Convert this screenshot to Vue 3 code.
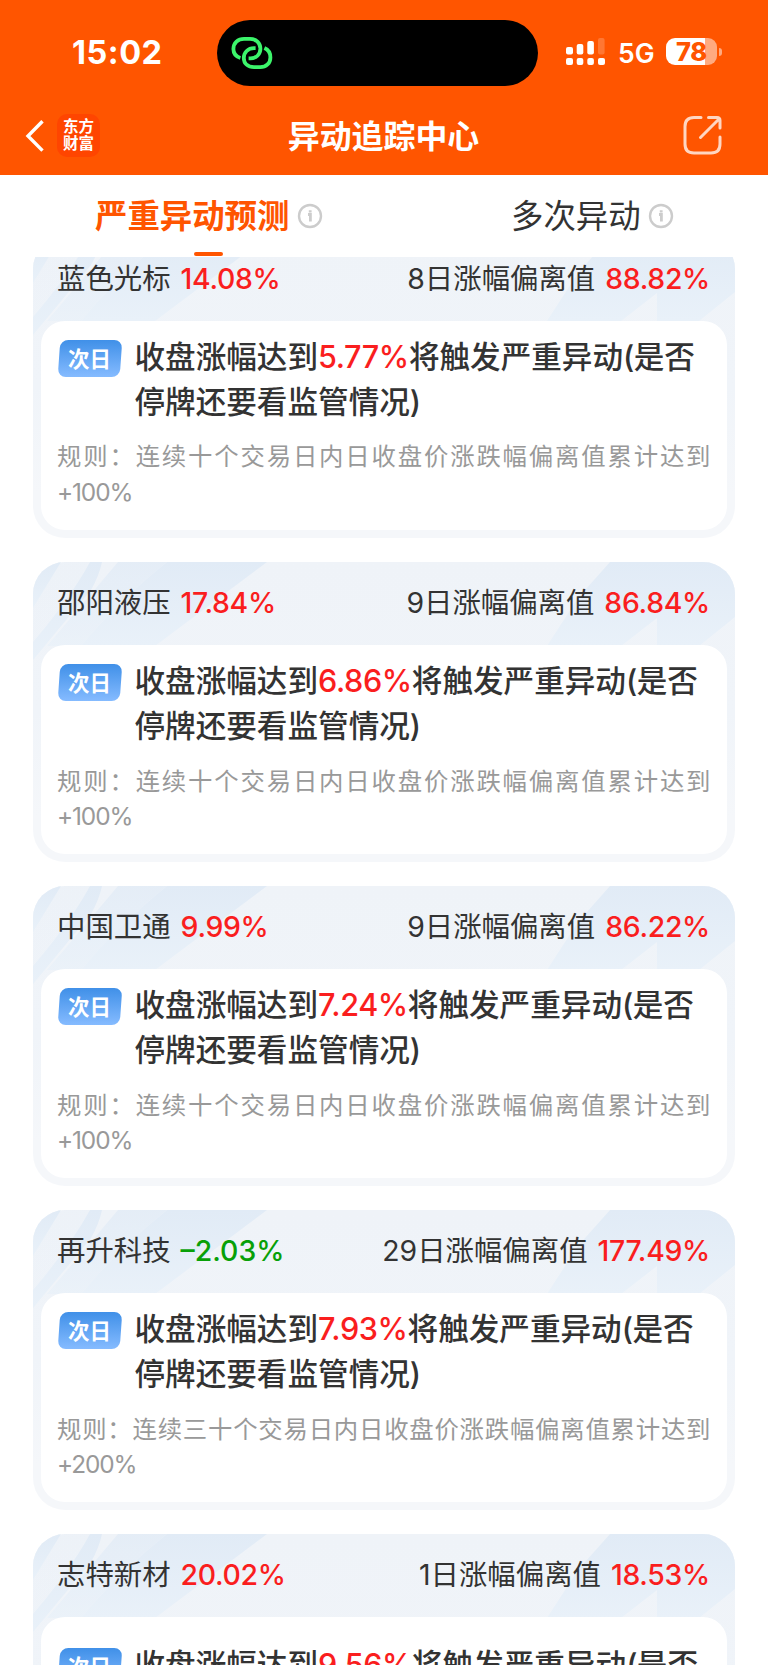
<script setup>
const cards = [
  { name: '蓝色光标', change: '14.08%', days: '8', dev: '88.82%', hit: '5.77%', rule: '规则：连续十个交易日内日收盘价涨跌幅偏离值累计达到', limit: '+100%' },
  { name: '邵阳液压', change: '17.84%', days: '9', dev: '86.84%', hit: '6.86%', rule: '规则：连续十个交易日内日收盘价涨跌幅偏离值累计达到', limit: '+100%' },
  { name: '中国卫通', change: '9.99%', days: '9', dev: '86.22%', hit: '7.24%', rule: '规则：连续十个交易日内日收盘价涨跌幅偏离值累计达到', limit: '+100%' },
  { name: '再升科技', change: '–2.03%', down: true, days: '29', dev: '177.49%', hit: '7.93%', rule: '规则：连续三十个交易日内日收盘价涨跌幅偏离值累计达到', limit: '+200%' },
  { name: '志特新材', change: '20.02%', days: '1', dev: '18.53%', hit: '9.56%', rule: '规则：连续十个交易日内日收盘价涨跌幅偏离值累计达到', limit: '+100%', loose: true },
]
</script>

<template>
  <div class="screen">
    <header class="head">
      <div class="status">
        <span class="time">15:02</span>
        <div class="island">
          <svg class="link" viewBox="0 0 42 34" width="42" height="34" fill="none" stroke="#3cf56b" stroke-width="3.8">
            <path d="M9.4 22 C5 20.6 2.4 17.4 2.4 13 C2.4 7 7 2.9 13 2.9 H19 C25 2.9 29.4 7 29.4 12.6 C29.4 18.6 25 22.4 19.6 22.4 H17.6" />
            <path d="M24.6 12.2 H23 C17 12.2 12.8 16.4 12.8 22 C12.8 27.6 17 31.2 23 31.2 H29.2 C35.2 31.2 39.4 27.2 39.4 21.4 C39.4 17 37.2 13.6 33.4 12" />
          </svg>
        </div>
        <svg class="signal" viewBox="0 0 40 28" width="40" height="28" fill="#fff">
          <rect x="0" y="9" width="7" height="7.5" rx="2" /><rect x="10.7" y="6" width="6.6" height="10.5" rx="2" />
          <rect x="21.3" y="3" width="6.6" height="13.5" rx="2" /><rect x="32" y="0" width="6.6" height="16.5" rx="2" opacity=".2" />
          <rect x="0" y="20" width="7" height="7" rx="2" /><rect x="10.7" y="20" width="6.6" height="7" rx="2" />
          <rect x="21.3" y="20" width="6.6" height="7" rx="2" /><rect x="32" y="20" width="7" height="7" rx="2" />
        </svg>
        <span class="net">5G</span>
        <div class="battery"><span>78</span></div>
        <i class="nub"></i>
      </div>
      <nav class="bar">
        <svg class="back" viewBox="0 0 20 32" width="20" height="32" fill="none" stroke="#fff" stroke-width="3.4"><path d="M17.5 1.2 L3 16 L17.5 30.6" /></svg>
        <div class="logo"><span>东方</span><span>财富</span></div>
        <h1>异动追踪中心</h1>
        <svg class="share" viewBox="0 0 40 40" width="40" height="40" fill="none" stroke="#ffd6c2" stroke-width="3" stroke-linecap="round">
          <path d="M18 2.5 H11 Q2 2.5 2 11.5 V29 Q2 38 11 38 H28 Q37 38 37 29 V22" />
          <path d="M25.5 2.5 H34 Q37 2.5 37 5.5 V13 M36 4 L17.5 22.5" />
        </svg>
      </nav>
    </header>

    <div class="tabs">
      <div class="tab active">
        <span class="label">严重异动预测</span>
        <svg class="info" viewBox="0 0 26 26" width="26" height="26"><circle cx="13" cy="13" r="11" fill="none" stroke="#ccc" stroke-width="2.4" /><path d="M11 11.5 H13.4 V18.5 M13.2 7.2 V9.4" fill="none" stroke="#ccc" stroke-width="2.8" /></svg>
      </div>
      <div class="tab">
        <span class="label">多次异动</span>
        <svg class="info" viewBox="0 0 26 26" width="26" height="26"><circle cx="13" cy="13" r="11" fill="none" stroke="#ccc" stroke-width="2.4" /><path d="M11 11.5 H13.4 V18.5 M13.2 7.2 V9.4" fill="none" stroke="#ccc" stroke-width="2.8" /></svg>
      </div>
      <i class="underline"></i>
    </div>

    <main class="list">
      <section v-for="c in cards" :key="c.name" class="card">
        <svg class="deco" viewBox="0 0 702 120" width="702" height="120">
          <defs>
            <linearGradient id="blue" x1="0" y1="0" x2="0" y2="1"><stop offset="0" stop-color="#e1ebf6" /><stop offset="1" stop-color="#e9f1f9" /></linearGradient>
          </defs>
          <g fill="url(#blue)">
            <path d="M0 0 H28 L0 46 Z" />
            <path d="M57 0 H69 Q66 14 58 28 L0 98 V80 Q36 38 57 0 Z" />
            <path d="M28 0 H57 Q36 38 0 80 V46 Z" opacity=".15" />
            <path d="M85 0 H134 Q84 40 48 84 H14 Z" opacity=".75" />
            <path d="M134 0 H234 L122 84 H48 Q84 40 134 0 Z" />
            <path d="M577 0 H702 V55 L666 84 H624 V56 L588 84 H514 L545 36 Z" />
          </g>
        </svg>
        <div class="top">
          <div class="pair"><span>{{ c.name }}</span><b :class="{ down: c.down }">{{ c.change }}</b></div>
          <div class="pair"><span><em>{{ c.days }}</em>日涨幅偏离值</span><b>{{ c.dev }}</b></div>
        </div>
        <div class="body" :class="{ loose: c.loose }">
          <div class="main">
            <div class="badge"><span>次日</span></div>
            <p class="text">收盘涨幅达到<b>{{ c.hit }}</b>将触发严重异动<em>(</em>是否<br>停牌还要看监管情况<em>)</em></p>
          </div>
          <p class="rule"><span class="line">{{ c.rule }}</span><span class="limit">{{ c.limit }}</span></p>
        </div>
      </section>
    </main>
  </div>
</template>

<style>
html, body { margin: 0; background: #fff; overflow: hidden; }
</style>

<style scoped>
.screen { width: 768px; height: 1665px; overflow: hidden; display: flex; flex-direction: column; background: #fff; color: #333; font-family: Inter, "Noto Sans CJK SC", sans-serif; }
* { box-sizing: border-box; }
p, h1 { margin: 0; }
em { font-style: normal; }
.head { height: 175px; flex: none; background: #ff5500; color: #fff; }
.status { height: 86px; padding-top: 20px; display: flex; align-items: flex-start; }
.time { width: 145px; margin-left: 72px; font-size: 32.5px; line-height: 66px; font-weight: 700; letter-spacing: .5px; }
.island { width: 321px; height: 66px; border-radius: 33px; background: #000; padding: 16px 0 0 14px; }
.link { display: block; }
.signal { margin: 18px 0 0 28px; }
.net { width: 48px; margin-left: 12px; font-size: 26.5px; font-weight: 600; line-height: 67px; }
.battery { width: 51px; height: 27px; margin-top: 18px; border-radius: 9px; background: linear-gradient(90deg, #fff 39px, #ffaa80 39px); color: #ff5500; font-size: 25.5px; font-weight: 800; line-height: 27px; text-align: center; letter-spacing: -.3px; }
.nub { width: 3px; height: 8px; margin: 28px 0 0 1.5px; background: #ffaa80; border-radius: 0 3px 3px 0; }
.bar { height: 89px; display: grid; grid-template-columns: 20px 43px 1fr 40px; align-items: center; padding: 9px 45px 0 25px; }
.back { display: block; margin-top: 2px; }
.logo { width: 43px; height: 43px; margin-left: 12px; border-radius: 10px; background: #ff4500; display: flex; flex-direction: column; justify-content: center; align-items: center; font-size: 15.5px; line-height: 17.5px; font-weight: 700; }
h1 { font-size: 31.9px; line-height: 44px; font-weight: 700; text-align: center; padding: 3px 4px 0 0; }
.share { display: block; margin-top: -1px; }
.tabs { height: 82px; flex: none; display: flex; position: relative; }
.tab { display: flex; align-items: center; font-size: 32.4px; line-height: 44px; height: 82px; padding-left: 95px; }
.tab .label { width: 195px; white-space: nowrap; padding-top: 1px; }
.tab.active .label { color: #ff5500; font-weight: 700; }
.tab + .tab { padding-left: 188px; }
.tab + .tab .label { width: 130px; }
.info { margin-left: 7px; flex: none; }
.underline { position: absolute; left: 194px; top: 77px; width: 29px; height: 4px; border-radius: 2px; background: #ff5500; }
.list { flex: 1; min-height: 0; overflow: hidden; padding: 0 33px; display: flex; flex-direction: column; gap: 24px; }
.card { height: 300.1px; flex: none; position: relative; overflow: hidden; border-radius: 32px; padding: 0 8px 8px; background: linear-gradient(180deg, #eff3f8, #f0f4f9 50%, #f5f7fa 85%); display: flex; flex-direction: column; }
.card:first-child { margin-top: -19.6px; }
.deco { position: absolute; left: 0; top: 0; }
.top { height: 83.6px; flex: none; display: flex; justify-content: space-between; padding: 0 17px 0 16px; position: relative; }
.pair { display: flex; gap: 10px; font-size: 28.4px; line-height: 82px; white-space: nowrap; }
.card:first-child .pair { line-height: 83px; }
.pair b { font-weight: 500; color: #fa1e1e; letter-spacing: -.3px; }
.pair b.down { color: #08a008; letter-spacing: 0; }
.body { flex: 1; position: relative; background: #fff; border-radius: 24px; padding: 14px 17px 0 16px; }
.body.loose { padding-top: 26px; }
.main { display: flex; }
.badge { width: 61.5px; height: 37px; margin: 5px 14.5px 0 1.5px; flex: none; display: grid; place-items: center; border-radius: 8px; background: linear-gradient(#4090e8, #85bbff); transform: skewX(-4deg); color: #fff; font-size: 21.5px; font-weight: 700; line-height: 36px; }
.badge span { transform: skewX(4deg); }
.text { font-size: 30.6px; line-height: 44.7px; font-weight: 500; white-space: nowrap; }
.text b { font-weight: 500; color: #fa1e1e; letter-spacing: -.4px; }
.text em { letter-spacing: -.6px; }
.rule { margin-top: 15px; color: #999; font-size: 24.4px; line-height: 35.7px; font-weight: 400; }
.rule span { display: block; }
.line { text-align: justify; text-align-last: justify; white-space: nowrap; margin-right: -.5px; }
.limit { letter-spacing: -1.1px; }
</style>
